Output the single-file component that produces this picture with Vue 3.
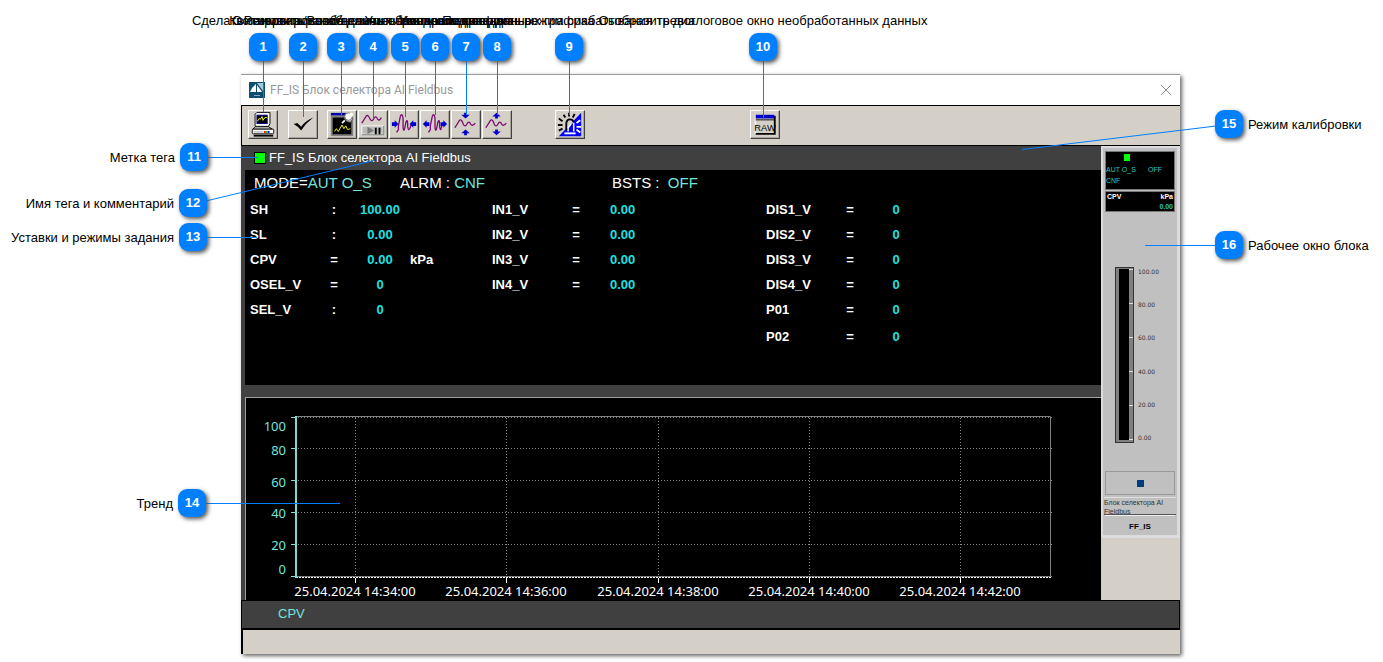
<script setup>
const title = 'FF_IS Блок селектора AI Fieldbus'

const topCallouts = [
  { n: 1, x: 263, end: 112, text: 'Сделать снимок экрана' },
  { n: 2, x: 303, end: 117, text: 'Квитировать сообщение' },
  { n: 3, x: 341, end: 116, text: 'Резервирование данных тренда' },
  { n: 4, x: 373, end: 118, text: 'Остановить/Возобновить обновление графика' },
  { n: 5, x: 405, end: 117, text: 'Увеличить ось времени' },
  { n: 6, x: 435, end: 115, text: 'Уменьшить ось данных' },
  { n: 7, x: 466, end: 115, text: 'Увеличить ось данных' },
  { n: 8, x: 497, end: 115, text: 'Уменьшить ось данных графика' },
  { n: 9, x: 569, end: 115, text: 'Подтвердить режим срабатывания тревог' },
  { n: 10, x: 763, end: 120, text: 'Отобразить диалоговое окно необработанных данных' }
]
const sideCallouts = [
  { n: 11, x: 194, y: 157, x2: 258, y2: 157, text: 'Метка тега', side: 'left' },
  { n: 12, x: 193, y: 203, x2: 374, y2: 160, text: 'Имя тега и комментарий', side: 'left' },
  { n: 13, x: 193, y: 237, x2: 257, y2: 237, text: 'Уставки и режимы задания', side: 'left' },
  { n: 14, x: 192, y: 503, x2: 340, y2: 503, text: 'Тренд', side: 'left' },
  { n: 15, x: 1229, y: 124, x2: 1022, y2: 149, text: 'Режим калибровки', side: 'right' },
  { n: 16, x: 1229, y: 245, x2: 1145, y2: 245, text: 'Рабочее окно блока', side: 'right' }
]

const groups = [
  {
    id: 'main',
    rows: [
      ['SH', ':', '100.00', ''],
      ['SL', ':', '0.00', ''],
      ['CPV', '=', '0.00', 'kPa'],
      ['OSEL_V', '=', '0', ''],
      ['SEL_V', ':', '0', '']
    ]
  },
  {
    id: 'in',
    rows: [
      ['IN1_V', '=', '0.00', ''],
      ['IN2_V', '=', '0.00', ''],
      ['IN3_V', '=', '0.00', ''],
      ['IN4_V', '=', '0.00', '']
    ]
  },
  {
    id: 'dis',
    rows: [
      ['DIS1_V', '=', '0', ''],
      ['DIS2_V', '=', '0', ''],
      ['DIS3_V', '=', '0', ''],
      ['DIS4_V', '=', '0', ''],
      ['P01', '=', '0', ''],
      ['P02', '=', '0', '']
    ]
  }
]

const yTicks = [
  { v: 100, line: 20, text: 34 },
  { v: 80, line: 51, text: 58 },
  { v: 60, line: 83, text: 90 },
  { v: 40, line: 115, text: 121 },
  { v: 20, line: 147, text: 153 },
  { v: 0, line: 179, text: 177 }
]
const xTicks = [
  { x: 110, t: '25.04.2024 14:34:00' },
  { x: 261, t: '25.04.2024 14:36:00' },
  { x: 413, t: '25.04.2024 14:38:00' },
  { x: 564, t: '25.04.2024 14:40:00' },
  { x: 715, t: '25.04.2024 14:42:00' }
]
const scale = ['100.00', '80.00', '60.00', '40.00', '20.00', '0.00']
</script>

<template>
  <main class="figure">
    <section class="window">
      <header class="titlebar">
        <svg class="app-icon" width="16" height="16" viewBox="0 0 16 16" aria-hidden="true">
          <rect width="16" height="16" fill="#0b4f6c" />
          <path d="M1 10Q3 5 7 2V10Z" fill="#fff" />
          <path d="M8 1H14V9Z" fill="#a9cbd8" />
          <path d="M8 3V10H13Z" fill="#fff" />
          <path d="M5 13.500H11" stroke="#7fb0c2" />
        </svg>
        <h1>{{ title }}</h1>
        <button class="close" aria-label="Закрыть">
          <svg width="12" height="12" viewBox="0 0 12 12"><path d="M1 1L11 11M11 1L1 11" stroke="#8c8c8c" fill="none" /></svg>
        </button>
      </header>

      <nav class="toolbar">
        <button class="tool" aria-label="Копия экрана">
          <svg viewBox="0 0 30 29">
            <path d="M6.500 3.500L8.500 1.500H22.500V13.500L21 16.500H6.500Z" fill="#fff" stroke="#000" />
            <rect x="8.500" y="4.500" width="11" height="9" fill="#000" stroke="#00008b" />
            <path d="M9 11L11 8L12 9L14 6L15 10L17 7H19" stroke="#ff0" fill="none" />
            <path d="M7 17H21L25 19.500H4Z" fill="#eee" stroke="#000" />
            <rect x="3.500" y="19.500" width="23" height="5" rx="1" fill="#fff" stroke="#000" />
            <path d="M5 22.500H15" stroke="#999" /><path d="M16 22.500H18" stroke="#f00" stroke-width="2" />
            <path d="M18 22.500H20" stroke="#0c0" stroke-width="2" /><path d="M20 22.500H22" stroke="#00f" stroke-width="2" />
            <path d="M5 26.500H26" stroke="#000" stroke-width="2" />
          </svg>
        </button>
        <button class="tool after-copy" aria-label="Подтвердить">
          <svg viewBox="0 0 30 29"><path d="M5 14L9 13L13 17Q18 10 26 7Q18 13 13 21Q9 16 5 14Z" fill="#000" /></svg>
        </button>
        <button class="tool after-check" aria-label="Резервирование графика">
          <svg viewBox="0 0 30 29">
            <path d="M3 3.500H20" stroke="#0000a0" stroke-width="3" />
            <rect x="4" y="6" width="22" height="20" fill="#000" stroke="#808080" stroke-width="2" />
            <path d="M7 22L9 19L11 22L15 15L17 19L19 16L21 20L24 19" stroke="#ff0" fill="none" />
            <path d="M15 13L18 10" stroke="#fff" stroke-width="2" />
            <path d="M17 5L20 3L27 8L24 12Q18 12 17 5Z" fill="#ccc" stroke="#555" />
            <circle cx="22" cy="6" r="4" fill="#fff" stroke="#777" /><circle cx="25" cy="4" r="2" fill="#fff" />
          </svg>
        </button>
        <button class="tool" aria-label="Пауза графика">
          <svg viewBox="0 0 30 29">
            <path d="M3 13L8 5Q10 4 12 9Q14 12 16 8Q18 4 20 9Q22 11 24 7" fill="none" stroke="#7b0a70" stroke-width="1.400" />
            <rect x="3" y="16" width="23" height="9" fill="#bbb" stroke="#fff" /><path d="M3 25.500H26.500V16" fill="none" stroke="#777" />
            <path d="M9 17V25L16 21Z" fill="#777" /><path d="M18 18V25M22 18V25" stroke="#000" stroke-width="2" />
          </svg>
        </button>
        <button class="tool" aria-label="Сжать по времени">
          <svg viewBox="0 0 30 29">
            <path d="M7 23L9 20V16L11 6Q13 1 14 8V18Q15 25 17 12Q19 7 19 17Q20 23 22 17L23 14" fill="none" stroke="#7b0a70" stroke-width="1.400" />
            <path d="M2 12H5V10L9 14L5 18V16H2ZM28 12H25V10L21 14L25 18V16H28Z" fill="#00c" />
          </svg>
        </button>
        <button class="tool" aria-label="Растянуть по времени">
          <svg viewBox="0 0 30 29">
            <path d="M8 23L10 20V16L12 6Q14 1 15 8V18Q16 25 18 12Q20 7 20 17Q21 23 22 17L23 14" fill="none" stroke="#7b0a70" stroke-width="1.400" />
            <path d="M9 12H6V10L2 14L6 18V16H9ZM21 12H24V10L28 14L24 18V16H21Z" fill="#00c" />
          </svg>
        </button>
        <button class="tool" aria-label="Сжать по значению">
          <svg viewBox="0 0 30 29">
            <path d="M3 18L8 10Q10 8 12 14Q14 18 16 14Q18 10 20 14Q22 17 25 13" fill="none" stroke="#7b0a70" stroke-width="1.400" />
            <path d="M13 2H16V4H19L14.500 8L10 4H13ZM13 26H16V24H19L14.500 20L10 24H13Z" fill="#00c" />
          </svg>
        </button>
        <button class="tool" aria-label="Растянуть по значению">
          <svg viewBox="0 0 30 29">
            <path d="M3 18L8 10Q10 8 12 14Q14 18 16 14Q18 10 20 14Q22 17 25 13" fill="none" stroke="#7b0a70" stroke-width="1.400" />
            <path d="M13 8H16V6H19L14.500 2L10 6H13ZM13 20H16V22H19L14.500 26L10 22H13Z" fill="#00c" />
          </svg>
        </button>
        <button class="tool alarm" aria-label="Режим тревог">
          <svg viewBox="0 0 30 29">
            <path d="M27 2V27H3Z" fill="#00f" />
            <path d="M11 20V14Q11 10 15 10Q18 10 19 12L11 20Z" fill="#d4d0c8" />
            <path d="M11 21V14Q11 9 15 9Q18 9 19 12" fill="none" stroke="#000" stroke-width="2" />
            <path d="M19 13V22M13 22V18L16 14" fill="none" stroke="#fff" stroke-width="1.500" />
            <path d="M9 24H21" stroke="#fff" stroke-width="2" />
            <path d="M8 4L10 7M14 2V6M20 3L18 7M3 8L7 11M2 15H7M3 21L7 19" stroke="#000" stroke-width="2" />
            <path d="M22 13L26 10M22 17H27M22 20L26 23" stroke="#fff" stroke-width="2" />
          </svg>
        </button>
        <button class="tool raw" aria-label="Необработанные данные">
          <svg viewBox="0 0 30 29">
            <rect x="4.500" y="4.500" width="21" height="20" fill="#d4d0c8" stroke="#fff" />
            <path d="M5 24.500H25.500V5" fill="none" stroke="#000" stroke-width="2" />
            <path d="M5 6H25" stroke="#0000c8" stroke-width="4" /><path d="M5 9.500H25" stroke="#000" />
            <text x="15" y="21" text-anchor="middle" class="raw-text">RAW</text>
          </svg>
        </button>
      </nav>

      <div class="body">
        <div class="left">
          <div class="tagbar"><i class="tag-mark"></i><span>{{ title }}</span></div>
          <div class="params">
            <div class="modes">
              <div>MODE=<b>AUT O_S</b></div>
              <div>ALRM : <b>CNF</b></div>
              <div>BSTS : &nbsp;<b>OFF</b></div>
            </div>
            <div class="groups">
              <table v-for="g in groups" :key="g.id" :class="g.id">
                <tbody>
                  <tr v-for="r in g.rows" :key="r[0]">
                    <th scope="row">{{ r[0] }}</th>
                    <td class="sign">{{ r[1] }}</td>
                    <td class="value">{{ r[2] }}</td>
                    <td class="unit">{{ r[3] }}</td>
                  </tr>
                </tbody>
              </table>
            </div>
          </div>
          <div class="trend">
            <svg viewBox="0 0 855 202" role="img" aria-label="Тренд">
              <g v-for="t in yTicks" :key="t.v">
                <path :d="`M52 ${t.line - .5}H806`" class="dots" />
                <path :d="`M45 ${t.line - .5}H50`" class="tick" />
                <text x="40" :y="t.text - 1" text-anchor="end" class="ylabel">{{ t.v }}</text>
              </g>
              <g v-for="t in xTicks" :key="t.x">
                <path :d="`M${t.x - .5} 20V179`" class="dots" />
                <path :d="`M${t.x - .5} 180V185`" stroke="#fff" />
                <text :x="t.x - 1" y="198" text-anchor="middle" class="xlabel">{{ t.t }}</text>
              </g>
              <path d="M49 18.500H804.500V178.500H49" class="frame" />
              <path d="M50 179.500H806" class="base" />
              <path d="M50 18V180" class="axis" />
            </svg>
          </div>
        </div>

        <aside class="side">
          <div class="faceplate">
            <div class="panel status">
              <i></i>
              <div><span>AUT O_S</span><span>OFF</span></div>
              <div>CNF</div>
            </div>
            <div class="panel reading">
              <div><span>CPV</span><span>kPa</span></div>
              <b>0.00</b>
            </div>
            <div class="gauge">
              <div class="tube"><i></i><div class="marks"><s v-for="v in scale" :key="v"></s></div></div>
              <ol><li v-for="v in scale" :key="v">{{ v }}</li></ol>
            </div>
            <button class="square" aria-label="Блок"><i></i></button>
            <p class="comment">Блок селектора AI Fieldbus</p>
            <strong>FF_IS</strong>
          </div>
        </aside>
      </div>
      <div class="legend">CPV</div>
      <footer class="statusbar"></footer>
    </section>

    <div class="callouts">
      <svg class="leaders" aria-hidden="true">
        <line v-for="c in topCallouts" :key="c.n" :x1="c.x + .5" y1="60" :x2="c.x + .5" :y2="c.end" />
        <line
          v-for="c in sideCallouts" :key="c.n"
          :x1="c.side === 'left' ? c.x + 13 : c.x - 13"
          :y1="c.y === c.y2 ? c.y + .5 : c.y + (c.side === 'left' ? -2 : 2)"
          :x2="c.x2" :y2="c.y2 + .5"
        />
      </svg>
      <div v-for="c in topCallouts" :key="c.n" class="pin top" :style="{ left: c.x + 'px', top: '47px' }">
        <span class="label">{{ c.text }}</span><span class="badge">{{ c.n }}</span>
      </div>
      <div
        v-for="c in sideCallouts" :key="c.n" class="pin" :class="c.side"
        :style="{ left: c.x + 'px', top: c.y + 'px' }"
      >
        <span class="label">{{ c.text }}</span><span class="badge">{{ c.n }}</span>
      </div>
    </div>
  </main>
</template>

<style>
body { margin: 0; background: #fff; }
</style>

<style scoped>
* { box-sizing: border-box; }
.figure { position: relative; padding: 74px 203px 8px 241px; overflow: hidden; font: 13px/16px "Liberation Sans", Arial, sans-serif; color: #000; }
button { padding: 0; margin: 0; border: 0; background: none; }
.window { border-top: 1px solid #999; background: #404040; box-shadow: 2px 2px 4px #666; }
.titlebar { display: flex; align-items: center; height: 30px; padding: 0 8px; background: #fff; }
.titlebar h1 { margin: 0 0 0 5px; flex: 1; font: 12px/16px Roboto, "Noto Sans", sans-serif; color: #999; }
.close { width: 12px; height: 12px; }
.close svg { display: block; }

.toolbar { display: flex; align-items: flex-start; gap: 1px; height: 41px; padding: 4px 6px; background: #d4d0c8; border: 1px solid #000; border-right: 0; }
.tool { flex: none; width: 30px; height: 29px; border: 1px solid; border-color: #fff #404040 #404040 #fff; box-shadow: inset -1px -1px #aaa69f; }
.tool svg { display: block; width: 28px; height: 27px; }
.after-copy { margin-left: 9px; }
.after-check { margin-left: 8px; }
.alarm { margin-left: 42px; }
.raw { margin-left: 164px; }
.raw-text { font: 10px "Liberation Sans", sans-serif; }

.body { display: flex; }
.left { flex: 1; min-width: 0; padding-left: 4px; }
.tagbar { display: flex; align-items: center; gap: 3px; height: 24px; padding: 0 9px; color: #fff; font-size: 13px; }
.tag-mark { width: 12px; height: 12px; background: #0f0; border: 1px solid #000; }
.params { height: 215px; padding: 3px 5px; background: #000; color: #fff; }
.modes { display: grid; grid-template-columns: 146px 212px 1fr; height: 24px; padding-left: 4px; font-size: 15px; line-height: 20px; }
.modes b { font-weight: normal; color: #74e4dc; }
.groups { display: grid; grid-template-columns: 242px 274px 1fr; align-items: start; }
table { border-collapse: collapse; table-layout: fixed; width: 200px; }
th, td { height: 25px; padding: 0; font-weight: bold; text-align: left; }
th { width: 68px; }
.sign { width: 32px; text-align: center; }
.value { width: 60px; text-align: center; color: #1fe0e0; }
.in .value { padding-left: 18px; text-align: left; }
.dis tr:last-child > * { height: 29px; }

.trend { margin-top: 12px; border: solid #a0a0a0; border-width: 1px 0 0 1px; background: #000; }
.trend svg { display: block; width: 100%; }
.dots { stroke: #888; stroke-dasharray: 1 2; fill: none; }
.tick { stroke: #74e4dc; }
.axis { stroke: #7fd8d4; stroke-width: 2; }
.frame { stroke: #808080; fill: none; }
.base { stroke: #fff; stroke-dasharray: 2 1; }
.ylabel, .xlabel { font: 13px "Noto Sans", sans-serif; fill: #74e4dc; }
.xlabel { fill: #fff; }

.side { flex: none; width: 79px; background: #d4d0c8; }
.faceplate { display: flex; flex-direction: column; height: 392px; padding: 3px 2px 0; background: #c0c0c0; border: solid #dcdce0; border-width: 2px 3px 3px 2px; font-size: 7px; line-height: 11px; }
.panel { margin-bottom: 1px; background: #000; border: 1px solid #777; color: #2cc5c0; }
.panel div { display: flex; justify-content: space-between; }
.status { height: 39px; }
.status i { display: block; width: 6px; height: 7px; margin: 2px 0 3px 18px; background: #0f0; }
.status div { padding-right: 12px; }
.reading { height: 21px; padding: 0 1px; line-height: 10px; font-weight: bold; text-align: right; }
.reading div { color: #fff; }
.reading b { display: block; }
.gauge { display: flex; gap: 4px; height: 176px; margin: 54px 0 28px 10px; }
.tube { display: flex; width: 19px; padding: 1px 0 2px 3px; background: #808080; border: 1px solid #333; }
.tube i { width: 10px; background: #000; }
.marks { flex: 1; display: flex; flex-direction: column; justify-content: space-between; }
.marks s { height: 1px; background: #ddd; }
ol { display: flex; flex-direction: column; justify-content: space-between; margin: 0; padding: 0; list-style: none; font: 6px/10px "DejaVu Sans", sans-serif; color: #333; }
.square { display: flex; align-items: center; justify-content: center; flex: none; height: 24px; border: 1px solid #999; }
.square i { width: 7px; height: 7px; background: #003c7d; }
.comment { margin: 2px -1px 0; height: 18px; border-top: 1px solid #e0e0e0; border-bottom: 1px solid #555; line-height: 9px; color: #333; }
.faceplate strong { padding-top: 5px; border-top: 1px solid #eee; text-align: center; font: bold 8px/12px "Liberation Sans", sans-serif; }

.legend { height: 30px; padding-left: 36px; line-height: 26px; font-size: 13px; color: #74e4dc; border: 1px solid #000; border-bottom-width: 2px; }
.statusbar { height: 24px; background: #d4d0c8; border-left: 2px solid #000; }

.callouts { position: absolute; inset: 0; pointer-events: none; }
.leaders { width: 100%; height: 100%; }
.leaders line { stroke: #0080ff; stroke-width: 1; }
.pin { position: absolute; width: 28px; height: 28px; margin: -14px; }
.badge { position: absolute; inset: 0; border-radius: 9px; background: #0080ff; color: #fff; font-weight: bold; line-height: 28px; text-align: center; box-shadow: 2px 2px 4px #555; }
.label { position: absolute; top: 7px; white-space: nowrap; }
.top .label { top: -20px; left: 50%; transform: translateX(-50%); }
.left .label { right: 33px; }
.right .label { left: 33px; }
</style>
